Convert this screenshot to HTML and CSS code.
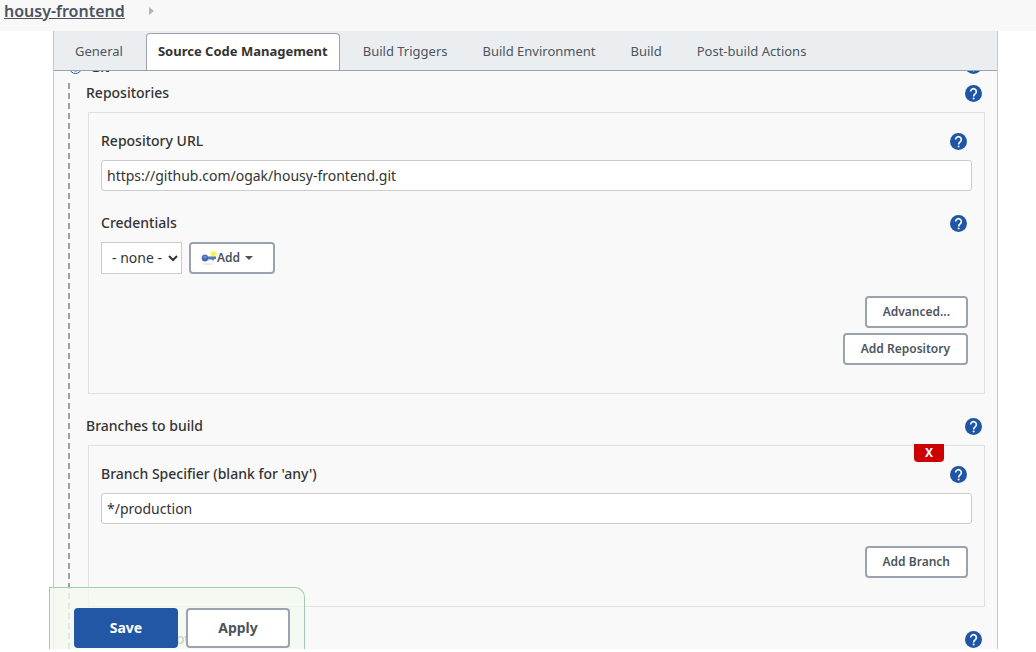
FILE: index.html
```
<!DOCTYPE html>
<html lang="en">
<head>
<meta charset="utf-8">
<title>housy-frontend Config</title>
<link rel="stylesheet" href="styles.css">
</head>
<body>
<svg width="0" height="0" class="defs" aria-hidden="true">
  <symbol id="help" viewBox="0 0 24 24">
    <circle cx="12" cy="12" r="12" fill="#1f55a5"/>
    <path d="M8 9.200a4 4 0 1 1 6.700 3c-1.600 1.400-2.500 1.900-2.500 3.900" fill="none" stroke="#fff" stroke-width="2.300"/>
    <circle cx="12.200" cy="19" r="1.400" fill="#fff"/>
  </symbol>
</svg>
<div class="page">
  <header class="crumbs">
    <a href="#project">housy-frontend</a>
    <svg class="crumb-arrow" viewBox="0 0 5 8"><path d="M0 0l5 4-5 4z" fill="#b4b4b4"/></svg>
  </header>
  <main class="config">
    <nav class="tabs">
      <a href="#general" class="tab">General</a>
      <a href="#scm" class="tab active">Source Code Management</a>
      <a href="#triggers" class="tab">Build Triggers</a>
      <a href="#environment" class="tab">Build Environment</a>
      <a href="#build" class="tab">Build</a>
      <a href="#post" class="tab">Post-build Actions</a>
    </nav>
    <form class="scroller">
      <div class="row scm-row">
        <label class="scm"><input type="radio" name="scm" checked> Git</label>
        <button type="button" class="help" aria-label="Help: Git"><svg><use href="#help"/></svg></button>
      </div>
      <div class="group">
        <div class="row">
          <span class="label">Repositories</span>
          <button type="button" class="help" aria-label="Help: Repositories"><svg><use href="#help"/></svg></button>
        </div>
        <section class="box">
          <div class="row">
            <label class="label" for="url">Repository URL</label>
            <button type="button" class="help" aria-label="Help: Repository URL"><svg><use href="#help"/></svg></button>
          </div>
          <input class="text" id="url" type="text" value="https://github.com/ogak/housy-frontend.git">
          <div class="row spaced">
            <label class="label" for="cred">Credentials</label>
            <button type="button" class="help" aria-label="Help: Credentials"><svg><use href="#help"/></svg></button>
          </div>
          <div class="controls">
            <span class="select-wrap">
              <select id="cred"><option>- none -</option></select>
              <svg class="chevron" viewBox="0 0 10 7"><path d="M1 1l4 4 4-4" fill="none" stroke="#333" stroke-width="2"/></svg>
            </span>
            <button type="button" class="btn add">
              <svg class="key" viewBox="0 0 16 16">
                <ellipse cx="7" cy="14" rx="6" ry="1" fill="#ebebeb"/>
                <circle cx="12.500" cy="4" r="3.500" fill="#f7f69a"/>
                <circle cx="12.500" cy="4" r="1.800" fill="#f0ef50"/>
                <path d="M6 6.500h9v2.500h-2v1.200h-2V9.500H6z" fill="#5579bd"/>
                <ellipse cx="4" cy="8" rx="3.300" ry="3.500" fill="#4469b3"/>
                <ellipse cx="4" cy="7" rx="2" ry="1.300" fill="#6d8dcb"/>
              </svg>Add<svg class="caret" viewBox="0 0 8 4"><path d="M0 0h8L4 4z" fill="#4d545d"/></svg>
            </button>
          </div>
          <div class="actions">
            <button type="button" class="btn">Advanced...</button>
            <button type="button" class="btn">Add Repository</button>
          </div>
        </section>
        <div class="row spaced">
          <span class="label">Branches to build</span>
          <button type="button" class="help" aria-label="Help: Branches to build"><svg><use href="#help"/></svg></button>
        </div>
        <section class="box">
          <button type="button" class="delete">X</button>
          <div class="row">
            <label class="label" for="branch">Branch Specifier (blank for 'any')</label>
            <button type="button" class="help" aria-label="Help: Branch Specifier"><svg><use href="#help"/></svg></button>
          </div>
          <input class="text" id="branch" type="text" value="*/production">
          <div class="actions">
            <button type="button" class="btn">Add Branch</button>
          </div>
        </section>
        <div class="row spaced">
          <span class="label">Repository browser</span>
          <button type="button" class="help" aria-label="Help: Repository browser"><svg><use href="#help"/></svg></button>
        </div>
      </div>
    </form>
  </main>
  <div class="savebar">
    <button type="button" class="big primary">Save</button>
    <button type="button" class="big">Apply</button>
  </div>
</div>
</body>
</html>
```
FILE: styles.css
```
* { box-sizing: border-box; }
body {
  margin: 0;
  background: #fff;
  color: #333;
  font: 14px/20px "Noto Sans", "Open Sans", sans-serif;
}
button, input, select { font: inherit; color: inherit; margin: 0; }
.defs { position: absolute; }
.page {
  position: relative;
  display: flex;
  flex-direction: column;
  height: 100vh;
  padding-bottom: 3px;
  overflow: hidden;
}
.crumbs {
  display: flex;
  align-items: center;
  gap: 24px;
  flex: none;
  height: 31px;
  padding: 0 4px 9px;
  background: #f8f8f8;
}
.crumbs a { color: #4d545d; font-size: 16px; font-weight: 600; }
.crumb-arrow { width: 5px; height: 8px; }
.config {
  display: flex;
  flex-direction: column;
  flex: 1;
  min-height: 0;
  margin: 0 38px 0 53px;
  border: solid #c4c7cc;
  border-width: 0 1px;
  background: #f9f9f9;
}
.tabs {
  display: flex;
  gap: 11px;
  flex: none;
  height: 40px;
  padding: 2px 9px 0;
  background: #ebeef1;
  border-bottom: 1px solid #9ba3af;
  font-size: 13px;
}
.tab {
  padding: 7px 11px;
  border: 1px solid transparent;
  border-bottom: 0;
  border-radius: 4px 4px 0 0;
  color: #4d545d;
  text-decoration: none;
  white-space: nowrap;
}
.tab.active { background: #fff; border-color: #9ba3af; color: #333; font-weight: 700; }
.scroller { flex: 1; min-height: 0; overflow: hidden; padding: 0 12px 0 14px; }
.row {
  display: flex;
  align-items: center;
  justify-content: space-between;
  height: 20px;
  padding-right: 3px;
}
.scm-row { margin: -16px 0 8px; }
.scm { display: flex; align-items: center; gap: 8px; padding-top: 4px; font-weight: 500; }
.scm input { width: 13px; height: 13px; margin-left: 1px; accent-color: #1f55a5; }
.label { font-weight: 500; }
.help { width: 17px; height: 17px; padding: 0; border: 0; background: none; }
.help svg { display: block; width: 17px; height: 17px; }
.group { border-left: 2px dashed #a0a0a0; padding-left: 16px; }
.spaced { margin-top: 22px; }
.box {
  position: relative;
  margin: 9px 0 0 2px;
  padding: 18px 12px 28px;
  border: 1px solid #dfe0e2;
}
.box .row { padding-right: 5px; }
.text {
  display: block;
  width: 100%;
  height: 31px;
  margin-top: 9px;
  padding: 0 5px;
  border: 1px solid #ccc;
  border-radius: 3px;
  background: #fff;
}
.controls { display: flex; gap: 7px; margin-top: 9px; }
.select-wrap { position: relative; }
select {
  appearance: none;
  width: 81px;
  height: 32px;
  padding: 0 10px;
  border: 1px solid #ccc;
  border-radius: 0;
  background: #fff;
}
.chevron { position: absolute; right: 4px; top: 13px; width: 10px; height: 7px; pointer-events: none; }
.btn {
  height: 32px;
  padding: 0 16px;
  border: 2px solid #9ba3af;
  border-radius: 4px;
  background: #fff;
  color: #4d545d;
  font-size: 12px;
  font-weight: 600;
  line-height: 16px;
}
.add { display: flex; align-items: center; width: 86px; padding: 0 10px; }
.key { width: 16px; height: 16px; }
.caret { width: 8px; height: 4px; margin-left: 5px; }
.actions {
  display: flex;
  flex-direction: column;
  align-items: flex-end;
  gap: 5px;
  margin-top: 22px;
  padding-right: 4px;
}
.delete {
  position: absolute;
  top: -2px;
  right: 40px;
  width: 30px;
  height: 18px;
  padding: 0;
  border: 0;
  border-radius: 0 0 4px 4px;
  background: #c00;
  color: #fff;
  font-size: 12px;
  font-weight: 700;
  line-height: 18px;
}
.savebar {
  position: absolute;
  left: 49px;
  bottom: 3px;
  display: flex;
  gap: 8px;
  padding: 20px 14px 1px 24px;
  border: 1px solid #a3cbb4;
  border-bottom: 0;
  border-radius: 0 10px 0 0;
  background: rgba(243, 249, 239, 0.8);
}
.big {
  width: 104px;
  height: 40px;
  border: 2px solid #9ba3af;
  border-radius: 4px;
  background: #fff;
  color: #4d545d;
  font-weight: 700;
}
.primary { background: #2257a5; border-color: #2257a5; color: #fff; }
```
